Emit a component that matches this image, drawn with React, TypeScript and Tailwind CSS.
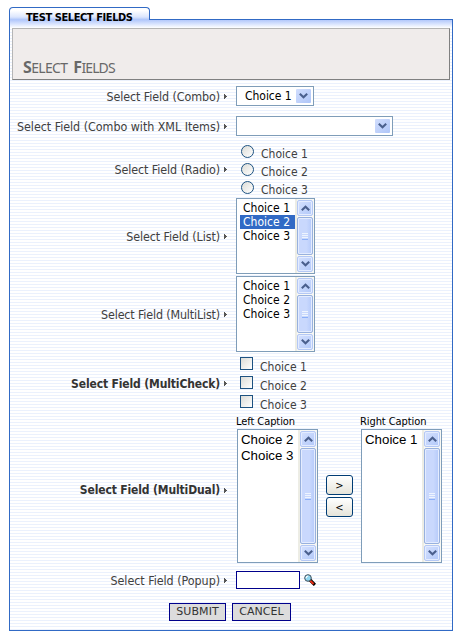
import type { ReactNode } from "react";

const tahoma = "font-['DejaVu_Sans_Condensed','DejaVu_Sans',sans-serif] [font-stretch:condensed]";

function Row({
  label,
  height,
  bold,
  tracking = "tracking-[-0.03px]",
  children,
}: {
  label: string;
  height: string;
  bold?: boolean;
  tracking?: string;
  children: ReactNode;
}) {
  return (
    <div className={`flex shrink-0 items-center ${height}`}>
      <div className="flex w-[218px] shrink-0 items-center justify-end gap-1 pt-px">
        <span
          className={
            bold
              ? "whitespace-nowrap text-[12px] leading-4 font-bold tracking-[-0.14px] text-[#333]"
              : `whitespace-nowrap text-[12.4px] leading-4 text-[#404040] ${tracking}`
          }
        >
          {label}
        </span>
        <svg width="4" height="7" viewBox="0 0 4 7" shapeRendering="crispEdges">
          <path d="M0 1h1v1h1v1h1v1h-1v1h-1v1h-1z" fill="#555" />
        </svg>
      </div>
      <div className="ml-2 self-stretch">{children}</div>
    </div>
  );
}

function Chevron({ up }: { up?: boolean }) {
  return (
    <svg width="9" height="6" viewBox="0 0 9 6" className={up ? "rotate-180" : ""}>
      <path d="M0.8 0.8L4.5 4.3L8.2 0.8" fill="none" stroke="#4a5f8d" strokeWidth="2.1" />
    </svg>
  );
}

function Combo({ value, width }: { value: string; width: string }) {
  return (
    <div className={`mt-[5px] flex h-5 items-center justify-between border border-[#7f9db9] bg-white pr-[2px] pl-[8px] ${width}`}>
      <span className="whitespace-nowrap text-[12px] tracking-[-0.03px] text-black">{value}</span>
      <span className="flex h-[14px] w-[15px] items-center justify-center rounded-[1px] bg-linear-to-br from-[#d2defd] to-[#aec5f8]">
        <Chevron />
      </span>
    </div>
  );
}

function ScrollBar() {
  const cap = "flex h-4 shrink-0 items-center justify-center rounded-[2px] border border-[#b4c8f5] bg-linear-to-br from-[#d5e1fe] to-[#b2c8f9] shadow-[inset_0_0_0_1px_#e4ecff]";
  return (
    <div className="flex w-[19px] shrink-0 flex-col gap-px border-l-2 border-[#edede5] bg-[#f8f8f4] py-px pr-px">
      <div className={cap}><Chevron up /></div>
      <div className="flex flex-1 flex-col items-center justify-center gap-px rounded-[2px] border border-[#98b1de] bg-linear-to-r from-[#c9d8fd] from-60% to-[#b5cafa] shadow-[inset_0_0_0_1px_#e4ecff]">
        <i className="h-px w-[6px] bg-[#eef4fe]" />
        <i className="h-px w-[6px] bg-[#eef4fe]" />
        <i className="h-px w-[6px] bg-[#eef4fe]" />
        <i className="h-px w-[6px] bg-[#8cb0f8]" />
      </div>
      <div className={cap}><Chevron /></div>
    </div>
  );
}

function List({ items, selected }: { items: string[]; selected?: string }) {
  return (
    <div className="mt-px flex h-[76px] w-[79px] justify-between border border-[#7f9db9] bg-white">
      <div className="w-[58px] pt-[2px] pl-[3px]">
        {items.map((item) => (
          <div
            key={item}
            className={`h-[14px] pl-[3px] text-[12px] leading-[14px] tracking-[0.02px] whitespace-nowrap ${
              item === selected ? "bg-[#316ac5] text-white" : "text-black"
            }`}
          >
            {item}
          </div>
        ))}
      </div>
      <ScrollBar />
    </div>
  );
}

function DualList({ caption, items }: { caption: string; items: string[] }) {
  return (
    <div className="w-[82px]">
      <div className="h-[16px] pt-px text-[11px] leading-[16px] tracking-[-0.08px] whitespace-nowrap text-black">{caption}</div>
      <div className="ml-px flex h-[134px] w-[81px] justify-between border border-[#7f9db9] bg-white">
        <div className="pt-[2px] pl-[3px] font-['Liberation_Sans',Arial,sans-serif] text-[13.3px] leading-4 whitespace-nowrap text-black">
          {items.map((item) => (
            <div key={item}>{item}</div>
          ))}
        </div>
        <ScrollBar />
      </div>
    </div>
  );
}

const choices = ["Choice 1", "Choice 2", "Choice 3"];
const moveButton =
  "flex h-5 w-[27px] items-center justify-center rounded-[3px] border border-[#003c74] bg-linear-to-b from-white to-[#e6e4da] text-[11px] leading-none text-black";
const formButton =
  "flex h-[18px] items-center justify-center border border-[#00008b] bg-[#dcdcdc] pt-px font-['DejaVu_Sans',Verdana,sans-serif] text-[11px] [font-stretch:normal] tracking-[0.08px] text-[#333]";

export default function App() {
  return (
    <div className={`h-[639px] w-[464px] overflow-hidden bg-white pt-[7px] pl-[9px] ${tahoma}`}>
      <div className="relative z-10 h-[13px] w-[141px] rounded-t-[4px] border-x border-t border-[#316ac5] bg-linear-to-b from-white from-20% via-[#dce6fd] via-75% to-[#a9c2fa] pl-[16px]">
        <span className="block pt-[2px] text-[11px] leading-4 font-bold tracking-[-0.42px] whitespace-nowrap text-black">
          TEST SELECT FIELDS
        </span>
      </div>
      <div className="-mt-px flex h-[612px] w-[444px] flex-col border border-[#316ac5] bg-white bg-[repeating-linear-gradient(to_bottom,#ebf1fd_0px,#ebf1fd_1px,#fff_1px,#fff_3px)]">
        <div className="h-[8px] shrink-0 bg-linear-to-b from-[#b3c8fb] to-white" />
        <div className="ml-[2px] flex h-[52px] w-[438px] shrink-0 items-baseline border border-t-[#b5b5b5] border-r-[#808080] border-b-[#808080] border-l-[#b5b5b5] bg-[#f0eceb] pt-[30px] pl-[10px] font-['Noto_Sans',sans-serif] [font-stretch:normal] whitespace-nowrap text-[#686868]">
          <span className="text-[16px] leading-4 font-bold tracking-[-0.6px]">S</span>
          <span className="text-[14px] leading-4 tracking-[-0.7px]">ELECT</span>
          <span className="ml-[6px] text-[16px] leading-4 font-bold tracking-[-0.6px]">F</span>
          <span className="text-[14px] leading-4 tracking-[-0.9px]">IELDS</span>
        </div>
        <div className="h-px shrink-0" />
        <Row label="Select Field (Combo)" height="h-[30px]" tracking="tracking-[-0.08px]">
          <Combo value="Choice 1" width="w-[78px]" />
        </Row>
        <Row label="Select Field (Combo with XML Items)" height="h-[30px]">
          <Combo value="" width="w-[157px]" />
        </Row>
        <Row label="Select Field (Radio)" height="h-[56px]" tracking="tracking-[-0.08px]">
          <div className="pt-[4px] pl-[5px]">
            {choices.map((choice) => (
              <div key={choice} className="flex h-[18px] items-start">
                <i className="h-[13px] w-[13px] rounded-full border border-[#1d5281] bg-linear-to-br from-[#dcdcd7] to-white" />
                <span className="mt-px ml-[7px] text-[12px] leading-4 text-[#404040]">{choice}</span>
              </div>
            ))}
          </div>
        </Row>
        <Row label="Select Field (List)" height="h-[78px]" tracking="tracking-[-0.08px]">
          <List items={choices} selected="Choice 2" />
        </Row>
        <Row label="Select Field (MultiList)" height="h-[78px]" tracking="tracking-[-0.15px]">
          <List items={choices} />
        </Row>
        <Row label="Select Field (MultiCheck)" height="h-[60px]" bold>
          <div className="pt-[4px] pl-[4px]">
            {choices.map((choice) => (
              <div key={choice} className="flex h-[19px] items-start">
                <i className="h-[13px] w-[13px] border border-[#1d5281] bg-linear-to-br from-[#dcdcd7] to-white" />
                <span className="mt-[2px] ml-[7px] text-[12px] leading-4 text-[#404040]">{choice}</span>
              </div>
            ))}
          </div>
        </Row>
        <Row label="Select Field (MultiDual)" height="h-[153px]" bold>
          <div className="flex">
            <DualList caption="Left Caption" items={["Choice 2", "Choice 3"]} />
            <div className="ml-[8px] flex flex-col gap-[2px] pt-[62px]">
              <div className={moveButton}>&gt;</div>
              <div className={moveButton}>&lt;</div>
            </div>
            <div className="ml-[7px]">
              <DualList caption="Right Caption" items={["Choice 1"]} />
            </div>
          </div>
        </Row>
        <Row label="Select Field (Popup)" height="h-[28px]">
          <div className="flex pt-[5px]">
            <div className="h-[18px] w-[64px] border border-[#00008b] bg-white" />
            <svg width="12" height="12" viewBox="0 0 12 12" className="mt-[3px] ml-[4px]">
              <path d="M6.5 6.5L9.8 9.8" stroke="#000" strokeWidth="3.2" strokeLinecap="square" />
              <path d="M6.3 6.8L9.6 10" stroke="#e52b13" strokeWidth="2" />
              <circle cx="4" cy="4" r="3.3" fill="#8fd6f0" stroke="#40505c" />
              <path d="M2 4.2Q2.2 2.2 4.2 2" fill="none" stroke="#fff" strokeWidth="1.2" />
            </svg>
          </div>
        </Row>
        <div className="flex gap-[6px] pt-[9px] pl-[159px]">
          <div className={`w-[57px] ${formButton}`}>SUBMIT</div>
          <div className={`w-[59px] ${formButton}`}>CANCEL</div>
        </div>
      </div>
    </div>
  );
}
